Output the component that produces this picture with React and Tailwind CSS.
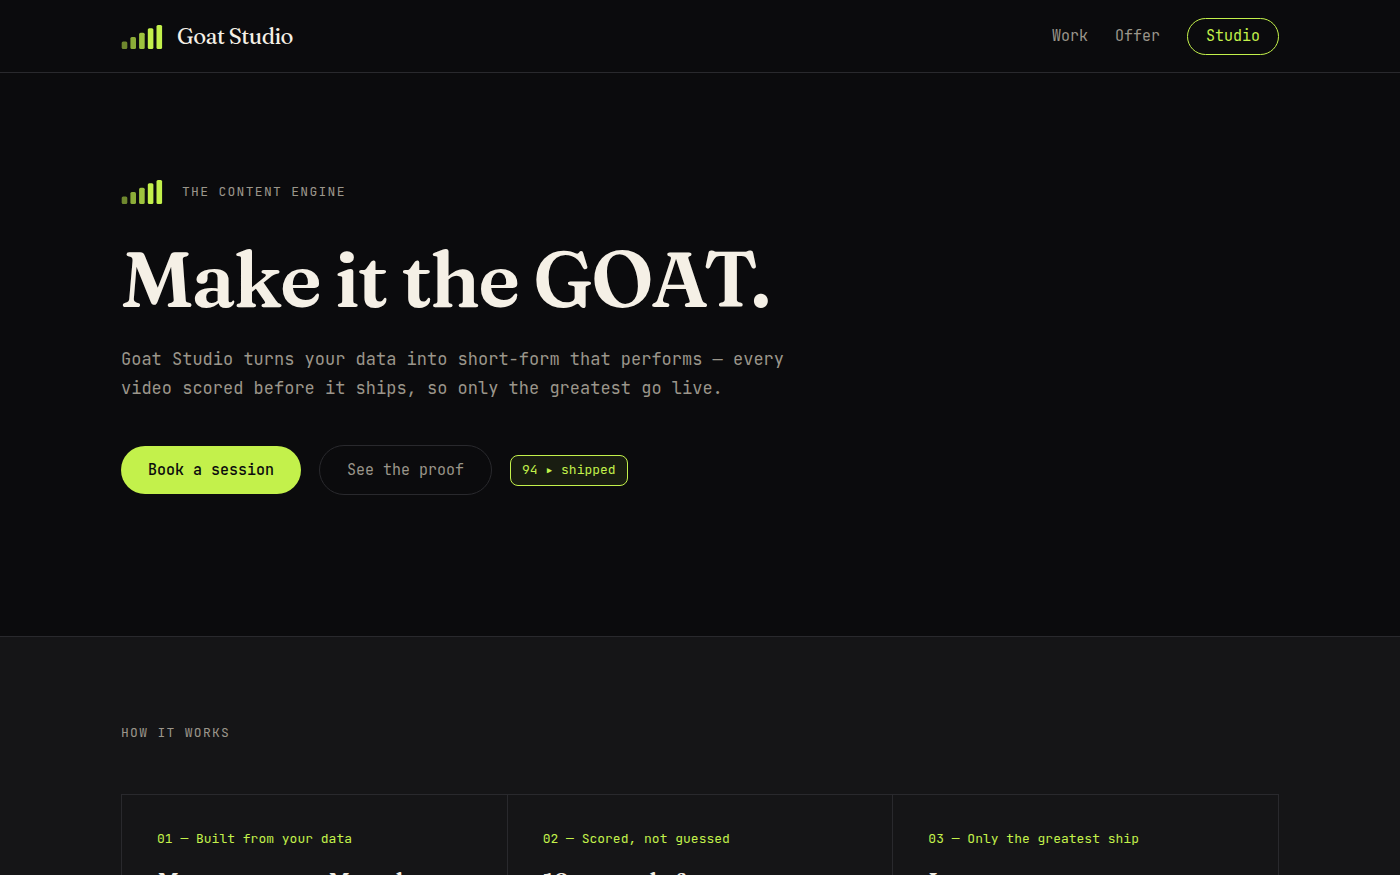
import React from 'react';

const bars = [
  { x: 0.7, y: 17.5, h: 7.5, opacity: 0.55 },
  { x: 9.4, y: 13, h: 12, opacity: 0.7 },
  { x: 18.1, y: 8.8, h: 16.2, opacity: 0.8 },
  { x: 26.8, y: 4.2, h: 20.8, opacity: 1 },
  { x: 35.5, y: 1, h: 24, opacity: 1 },
];

const steps = [
  { label: '01 — Built from your data', title: 'Measure some, Moved' },
  { label: '02 — Scored, not guessed', title: '10 scores before' },
  { label: '03 — Only the greatest ship', title: 'Less, never more' },
];

const BarsLogo = () => (
  <svg width="42" height="26" viewBox="0 0 42 26" fill="#c3f14b" aria-hidden="true">
    {bars.map((bar) => (
      <rect key={bar.x} x={bar.x} y={bar.y} width="5.6" height={bar.h} rx="1.5" opacity={bar.opacity} />
    ))}
  </svg>
);

const Header = () => (
  <header className="border-b border-[#29292d]">
    <div className="max-w-[1206px] mx-auto px-6 pt-[18px] pb-[17px] flex items-center justify-between">
      <a href="#" className="flex items-center gap-[14px]">
        <BarsLogo />
        <span className="font-['Fraunces','Liberation_Serif',serif] text-[22px] font-medium tracking-tight">
          Goat Studio
        </span>
      </a>
      <nav className="flex items-center gap-[27px] text-[15px] text-[#9b968b]">
        <a href="#work">Work</a>
        <a href="#offer">Offer</a>
        <a href="#studio" className="h-[37px] px-[18px] flex items-center rounded-full border border-[#c3f14b] text-[#c3f14b]">
          Studio
        </a>
      </nav>
    </div>
  </header>
);

const Hero = () => (
  <section className="max-w-[1206px] mx-auto px-6 pt-[106px] pb-[141px]">
    <div className="flex items-center gap-[19px]">
      <BarsLogo />
      <p className="text-[13px] tracking-[0.1em] uppercase text-[#9b968b]">The content engine</p>
    </div>
    <h1 className="mt-8 font-['Fraunces','Liberation_Serif',serif] font-semibold tracking-tight text-[78px] leading-[84px]">
      Make it the GOAT.
    </h1>
    <p className="mt-6 max-w-[710px] text-[17px] leading-[29px] text-[#9b968b]">
      Goat Studio turns your data into short-form that performs — every video scored before it ships, so only the greatest go live.
    </p>
    <div className="mt-[42px] flex flex-wrap items-center gap-[18px]">
      <button className="h-12 px-[27px] rounded-full bg-[#c3f14b] text-[#0b0b0d] text-[15px] font-medium">
        Book a session
      </button>
      <button className="h-[50px] px-[27px] rounded-full border border-[#29292d] text-[#9b968b] text-[15px]">
        See the proof
      </button>
      <span className="h-[31px] px-[11px] flex items-center rounded-lg border border-[#c3f14b] bg-[#c3f14b]/8 text-[#c3f14b] text-[13px] whitespace-pre">
        94 <span className="font-['DejaVu_Sans_Mono',monospace]">▸</span> shipped
      </span>
    </div>
  </section>
);

const HowItWorks = () => (
  <section className="border-t border-[#29292d] bg-[#151517]">
    <div className="max-w-[1206px] mx-auto px-6 pt-[86px] pb-24">
      <h2 className="text-[13px] leading-5 tracking-[0.1em] uppercase text-[#9b968b]">How it works</h2>
      <div className="mt-[51px] grid grid-cols-3 gap-px p-px bg-[#29292d]">
        {steps.map((step) => (
          <article key={step.label} className="bg-[#151517] px-[35px] pt-[34px] pb-9">
            <p className="text-[13px] leading-5 text-[#c3f14b]">{step.label}</p>
            <h3 className="mt-[17px] font-['Fraunces','Liberation_Serif',serif] font-semibold tracking-tight text-2xl">{step.title}</h3>
          </article>
        ))}
      </div>
    </div>
  </section>
);

const App = () => {
  return (
    <div className="h-screen overflow-hidden bg-[#0b0b0d] text-[#f5f0e6] font-['JetBrains_Mono','DejaVu_Sans_Mono',monospace]">
      <Header />
      <main>
        <Hero />
        <HowItWorks />
      </main>
    </div>
  );
};

export default App;
